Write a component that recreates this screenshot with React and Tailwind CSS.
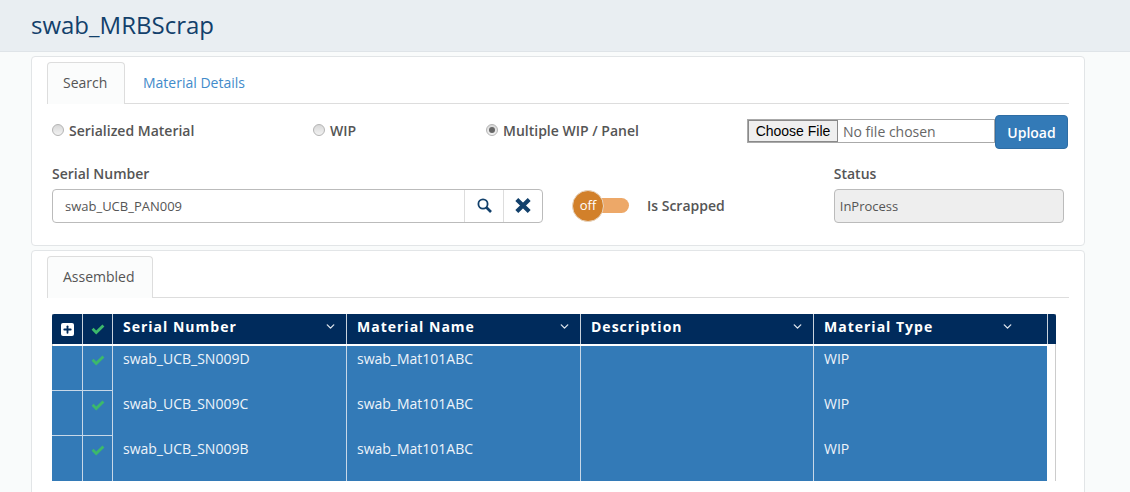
import { ChevronDown, Plus } from "lucide-react";

const columns = [
  { label: "Serial Number", pr: "pr-[9px]" },
  { label: "Material Name", pr: "pr-[9px]" },
  { label: "Description", pr: "pr-[9px]" },
  { label: "Material Type", pr: "pr-[33px]" },
];

const rows = [
  { serial: "swab_UCB_SN009D", name: "swab_Mat101ABC", type: "WIP" },
  { serial: "swab_UCB_SN009C", name: "swab_Mat101ABC", type: "WIP" },
  { serial: "swab_UCB_SN009B", name: "swab_Mat101ABC", type: "WIP" },
];

function CheckMark() {
  return (
    <svg width="14" height="11" viewBox="0 0 14 11" className="text-[#3cb96b]">
      <path d="M0.6 5.8 L2.6 3.8 L5.2 6.4 L11.4 0.4 L13.4 2.4 L5.2 10.4 Z" fill="currentColor" />
    </svg>
  );
}

function SearchIcon() {
  return (
    <svg width="15" height="15" viewBox="0 0 15 15" fill="none" stroke="#12406b" className="mb-[2px]">
      <circle cx="6" cy="6" r="4.6" strokeWidth="1.8" />
      <path d="M9.5 9.5 L14 14" strokeWidth="2.6" />
    </svg>
  );
}

function RemoveIcon() {
  return (
    <svg width="16" height="15" viewBox="0 0 16 15" fill="none" stroke="#12406b" strokeWidth="4.2" className="mb-[1px]">
      <path d="M1.8 1.5 L14.2 13.5 M14.2 1.5 L1.8 13.5" />
    </svg>
  );
}

function Radio({ label, checked, width }) {
  return (
    <label className="mb-[4px] flex items-center gap-[5px] text-[14px] font-semibold text-[#555]" style={{ width }}>
      <span className="flex h-3 w-3 items-center justify-center rounded-full border border-[#b4b4b4] bg-gradient-to-b from-[#d8d8d8] to-[#f2f2f2]">
        {checked && <span className="h-[6px] w-[6px] rounded-full bg-[#666]" />}
      </span>
      {label}
    </label>
  );
}

export default function App() {
  return (
    <div className="h-[492px] overflow-hidden bg-[#f9fbfb] font-['Open_Sans',sans-serif] text-[#555]">
      <header className="flex h-[52px] items-center border-b border-[#dfe4e8] bg-[#e9eef2] pl-[31px] pb-[2px]">
        <h1 className="text-[24px] font-normal text-[#12406b]">swab_MRBScrap</h1>
      </header>

      <main className="mx-[31px] mr-[45px] flex flex-col gap-[4px] pt-[4px]">
        {/* Search panel */}
        <section className="h-[190px] rounded border border-[#e2e5e7] bg-white px-[15px] pt-[5px]">
          <div className="flex h-[42px] border-b border-[#ddd] text-[14px]">
            <div className="h-[42px] w-[78px] rounded-t border border-b-0 border-[#ddd] bg-[#fbfcfc] pl-[15px] pt-[9px] text-[#555]">
              Search
            </div>
            <div className="pl-[18px] pt-[10px] text-[#428bca]">Material Details</div>
          </div>

          <div className="mt-[11px] flex h-[34px] items-center pl-[5px]">
            <Radio label="Serialized Material" width={261} />
            <Radio label="WIP" width={173} />
            <Radio label="Multiple WIP / Panel" checked width={261} />
            <div className="flex items-center">
              <div className="mb-[2px] flex h-[24px] w-[248px] items-center border border-[#aaa] bg-white font-['Liberation_Sans',sans-serif] text-[14px]">
                <span className="flex h-[22px] w-[90px] items-center justify-center border border-[#8a8a8a] bg-[#efefef] text-black">
                  Choose File
                </span>
                <span className="pl-[5px] font-['Open_Sans',sans-serif] text-[14px] text-[#666]">No file chosen</span>
              </div>
              <button className="flex h-[34px] w-[73px] items-center justify-center rounded border border-[#2e6da4] bg-[#337ab7] text-[14px] font-semibold text-white">
                Upload
              </button>
            </div>
          </div>

          <div className="mt-[17px] flex pl-[5px]">
            <div className="w-[491px]">
              <div className="h-[23px] text-[14px] font-semibold leading-[16px] text-[#555]">Serial Number</div>
              <div className="flex h-[34px] rounded border border-[#bbb] bg-white">
                <div className="flex flex-1 items-center pl-[12px] pt-[1px] text-[13px] text-[#555]">swab_UCB_PAN009</div>
                <div className="flex w-[39px] items-center justify-center border-l border-[#ddd]">
                  <SearchIcon />
                </div>
                <div className="flex w-[39px] items-center justify-center border-l border-[#ddd]">
                  <RemoveIcon />
                </div>
              </div>
            </div>

            <div className="ml-[29px] flex h-[34px] items-center self-end">
              <div className="relative h-[16px] w-[57px] rounded-r-lg">
                <div className="absolute left-[8px] top-0 h-[15px] w-[49px] rounded-lg bg-[#eda868]" />
                <div className="absolute -top-[8px] left-0 flex h-[32px] w-[32px] items-center justify-center rounded-full border border-[#e8d5c0] bg-[#d2802a] text-[13px] text-white">
                  off
                </div>
              </div>
              <span className="mb-[2px] ml-[18px] text-[14px] font-semibold text-[#555]">Is Scrapped</span>
            </div>

            <div className="ml-[109px] w-[230px]">
              <div className="h-[23px] text-[14px] font-semibold leading-[16px] text-[#555]">Status</div>
              <div className="flex h-[34px] items-center rounded border border-[#bbb] bg-[#eee] pl-[5px] pt-[1px] text-[13px] text-[#555]">
                InProcess
              </div>
            </div>
          </div>
        </section>

        {/* Assembled grid */}
        <section className="h-[300px] rounded border border-[#e2e5e7] bg-white px-[15px] pt-[5px]">
          <div className="flex h-[42px] border-b border-[#ddd]">
            <div className="h-[42px] w-[106px] rounded-t border border-b-0 border-[#ddd] bg-[#fbfcfc] pl-[15px] pt-[9px] text-[14px] text-[#555]">
              Assembled
            </div>
          </div>

          <div className="ml-[5px] mt-[16px] w-[1004px] border-x border-[#ccc]">
            <div className="-mx-px grid h-[30px] grid-cols-[31px_30px_234px_234px_233px_234px_1fr] rounded-t-[2px] bg-[#002b5c] text-[14px] font-bold tracking-[1px] text-white">
              <div className="flex items-center justify-center border-r border-[#c8d2dc]">
                <span className="flex h-[13px] w-[13px] items-center justify-center rounded-[2px] bg-white">
                  <Plus size={11} strokeWidth={4} className="text-[#002b5c]" />
                </span>
              </div>
              <div className="flex items-center justify-center border-r border-[#c8d2dc]">
                <CheckMark />
              </div>
              {columns.map((col) => (
                <div key={col.label} className={`flex items-center justify-between border-r border-[#c8d2dc] pb-[6px] pl-[10px] ${col.pr}`}>
                  {col.label}
                  <ChevronDown size={13} strokeWidth={2.5} className="text-[#dce4ec]" />
                </div>
              ))}
              <div />
            </div>

            <div className="mt-px border-t border-white">
              {rows.map((row, i) => (
                <div key={row.serial} className="-ml-px grid h-[45px] w-[995px] grid-cols-[31px_30px_234px_234px_233px_233px] bg-[#337ab7] text-[14px] font-[520] text-[#eef4fa]">
                  <div className={`border-r border-[#c8d8e8] ${i < 2 ? "border-b" : ""}`} />
                  <div className={`flex justify-center border-r border-[#c8d8e8] pt-[9px] ${i < 2 ? "border-b" : ""}`}>
                    <CheckMark />
                  </div>
                  <div className="border-r border-[#c8d8e8] pl-[10px] pt-[2px]">{row.serial}</div>
                  <div className="border-r border-[#c8d8e8] pl-[10px] pt-[2px]">{row.name}</div>
                  <div className="border-r border-[#c8d8e8]" />
                  <div className="pl-[10px] pt-[2px]">{row.type}</div>
                </div>
              ))}
            </div>
          </div>
        </section>
      </main>
    </div>
  );
}
